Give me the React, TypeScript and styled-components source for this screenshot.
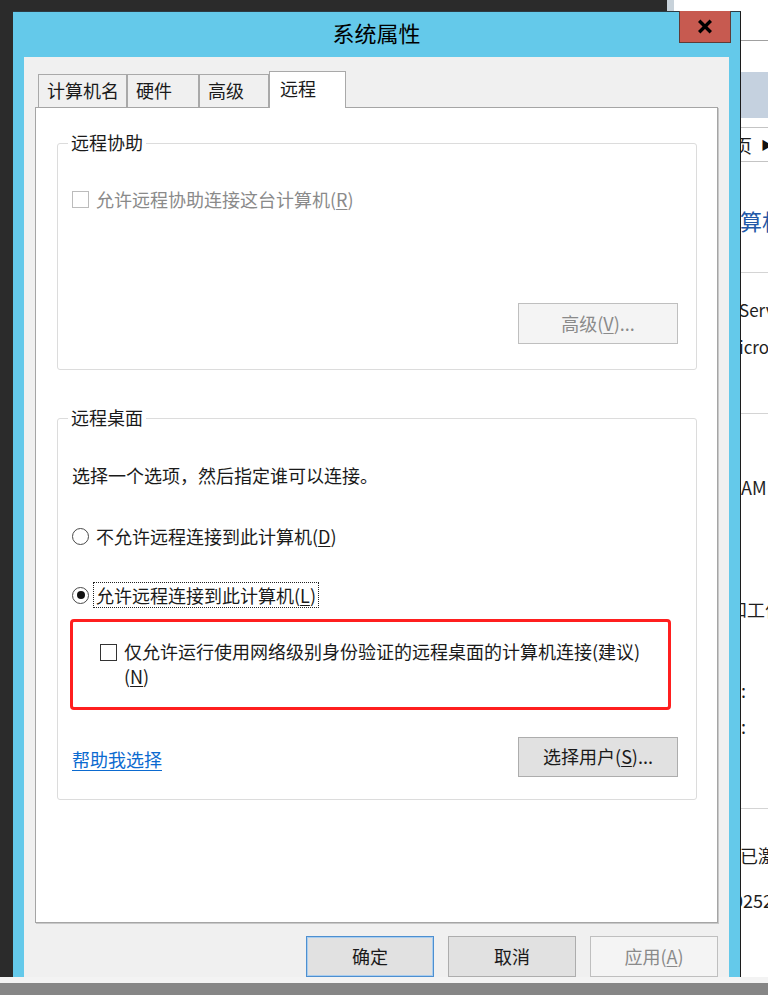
import React from "react";
import styled, { createGlobalStyle } from "styled-components";

const GlobalStyle = createGlobalStyle`
  html, body {
    margin: 0;
    padding: 0;
    overflow: hidden;
  }
  body {
    font-family: "Noto Sans CJK SC", "Noto Sans", sans-serif;
  }
  #root {
    width: 768px;
    height: 995px;
  }
  u {
    text-underline-offset: 2px;
  }
`;

const Desktop = styled.div`
  position: relative;
  width: 768px;
  height: 995px;
  overflow: hidden;
  background: #2b2b2b;
`;

// window behind the dialog, only its left edge shows on the right
const BackWindow = styled.div`
  position: absolute;
  left: 674px;
  top: 0;
  width: 94px;
  height: 100%;
  background: #fff;
  display: flex;
  flex-direction: column;
  padding-left: 65px;
  box-sizing: border-box;
  overflow: hidden;
  font-size: 18px;
  color: #1e1e1e;
  white-space: nowrap;
`;

const BackRule = styled.div<{ $top: number; $color?: string }>`
  margin-top: ${(p) => p.$top}px;
  height: 1px;
  flex: none;
  background: ${(p) => p.$color || "#d4d4d4"};
`;

const BackBand = styled.div`
  margin-top: 31px;
  height: 46px;
  flex: none;
  background: #c5d1df;
`;

const PathBar = styled.div`
  margin-top: 9px;
  height: 35px;
  flex: none;
  box-sizing: border-box;
  border-top: 1px solid #c4c4c4;
  border-bottom: 1px solid #c4c4c4;
  display: flex;
  align-items: center;
  span:first-child {
    margin-left: -5px;
  }
  span:last-child {
    margin-left: 9px;
    font-size: 12px;
    color: #111;
  }
`;

const Frag = styled.div<{ $top: number; $h: number; $size?: number; $color?: string; $shift?: number }>`
  margin-top: ${(p) => p.$top}px;
  margin-left: ${(p) => p.$shift || 0}px;
  height: ${(p) => p.$h}px;
  line-height: ${(p) => p.$h}px;
  flex: none;
  font-size: ${(p) => p.$size || 18}px;
  color: ${(p) => p.$color || "#1e1e1e"};
`;

const TopStrip = styled.div`
  position: absolute;
  left: 667px;
  top: 0;
  width: 7px;
  height: 11px;
  background: #c8d2da;
`;

const Dialog = styled.div`
  position: absolute;
  left: 13px;
  top: 11px;
  width: 728px;
  height: 1000px;
  box-sizing: border-box;
  background: #64c9ea;
  border-top: 1px solid #2c3b44;
  border-right: 1px solid #1c1c1c;
  display: flex;
  flex-direction: column;
`;

const TitleBar = styled.div`
  position: relative;
  height: 45px;
  flex: none;
  box-sizing: border-box;
  padding-bottom: 5px;
  display: flex;
  align-items: center;
  justify-content: center;
`;

const Title = styled.div`
  font-size: 22px;
  line-height: 28px;
  color: #000;
`;

const CloseButton = styled.div`
  position: absolute;
  top: -1px;
  right: 9px;
  width: 52px;
  height: 32px;
  box-sizing: border-box;
  background: #c75a50;
  border: 1px solid #5e3b37;
  border-top: none;
  display: flex;
  align-items: center;
  justify-content: center;
`;

const Client = styled.div`
  flex: 1;
  margin: 0 11px;
  background: #f0f0f0;
  padding: 14px 11px 0 11px;
  display: flex;
  flex-direction: column;
`;

const TabRow = styled.div`
  position: relative;
  z-index: 1;
  height: 37px;
  margin-bottom: -1px;
  padding-left: 3px;
  display: flex;
  align-items: flex-end;
`;

const Tab = styled.div<{ $w: number; $active?: boolean }>`
  width: ${(p) => p.$w}px;
  height: ${(p) => (p.$active ? 37 : 33)}px;
  margin-bottom: ${(p) => (p.$active ? 0 : 1)}px;
  box-sizing: border-box;
  border: 1px solid #a9a9a9;
  border-bottom: none;
  background: ${(p) => (p.$active ? "#fff" : "#f0f0f0")};
  padding-left: ${(p) => (p.$active ? 10 : 8)}px;
  padding-bottom: ${(p) => (p.$active ? 5 : 3)}px;
  display: flex;
  align-items: center;
  font-size: 18px;
  color: #1a1a1a;
`;

const Panel = styled.div`
  position: relative;
  height: 816px;
  flex: none;
  box-sizing: border-box;
  background: #fff;
  border: 1px solid #a5a5a5;
  box-shadow: 1px 1px 0 #c8c8c8;
  padding: 0 20px 0 21px;
  display: flex;
  flex-direction: column;
`;

const Group = styled.fieldset<{ $top: number }>`
  margin: ${(p) => p.$top}px 0 0 0;
  padding: 0;
  min-width: 0;
  border: 1px solid #dcdcdc;
  border-radius: 3px;
`;

const Legend = styled.legend`
  margin-left: 10px;
  padding: 0 3px 2px;
  font-size: 18px;
  line-height: 22px;
  color: #1a1a1a;
`;

const GroupBody = styled.div<{ $bottom: number }>`
  padding: 0 18px ${(p) => p.$bottom}px 14px;
  display: flex;
  flex-direction: column;
`;

const CheckRow = styled.div<{ $top: number }>`
  margin-top: ${(p) => p.$top}px;
  display: flex;
  align-items: center;
  gap: 7px;
  font-size: 18px;
  line-height: 24px;
`;

const Box = styled.span<{ $disabled?: boolean }>`
  width: 17px;
  height: 17px;
  flex: none;
  box-sizing: border-box;
  background: #fff;
  border: 1px solid ${(p) => (p.$disabled ? "#bcbcbc" : "#333")};
`;

const Label = styled.span<{ $disabled?: boolean }>`
  color: ${(p) => (p.$disabled ? "#8a8a8a" : "#1a1a1a")};
`;

const ButtonRow = styled.div<{ $top: number }>`
  margin-top: ${(p) => p.$top}px;
  display: flex;
  justify-content: flex-end;
`;

const Button = styled.div<{ $w: number; $h: number; $kind?: "default" | "disabled" }>`
  width: ${(p) => p.$w}px;
  height: ${(p) => p.$h}px;
  flex: none;
  box-sizing: border-box;
  padding-bottom: 2px;
  display: flex;
  align-items: center;
  justify-content: center;
  font-size: 18px;
  background: ${(p) => (p.$kind === "disabled" ? "#f4f4f4" : "#e1e1e1")};
  color: ${(p) => (p.$kind === "disabled" ? "#8a8a8a" : "#1a1a1a")};
  border: 1px solid
    ${(p) => (p.$kind === "default" ? "#4d8fd0" : p.$kind === "disabled" ? "#bfbfbf" : "#adadad")};
  box-shadow: ${(p) => (p.$kind === "default" ? "inset 0 0 0 1px #a9cdef" : "none")};
`;

const Desc = styled.div`
  margin-top: 33px;
  font-size: 18px;
  line-height: 24px;
  color: #1a1a1a;
`;

const RadioRow = styled.div<{ $top: number }>`
  margin-top: ${(p) => p.$top}px;
  display: flex;
  align-items: center;
  gap: 4px;
  font-size: 18px;
`;

const Radio = styled.span<{ $checked?: boolean }>`
  position: relative;
  width: 17px;
  height: 17px;
  flex: none;
  box-sizing: border-box;
  border: 1px solid #4a4a4a;
  border-radius: 50%;
  background: #fff;
  &::after {
    content: "";
    display: ${(p) => (p.$checked ? "block" : "none")};
    position: absolute;
    left: 3.5px;
    top: 3.5px;
    width: 8px;
    height: 8px;
    border-radius: 50%;
    background: #111;
  }
`;

const RadioLabel = styled.span<{ $focused?: boolean }>`
  padding: 1px 2px;
  line-height: 22px;
  color: #1a1a1a;
  border: 1px dotted ${(p) => (p.$focused ? "#222" : "transparent")};
`;

// red annotation frame drawn around the NLA option
const Highlight = styled.div`
  margin: 11px 7px 0 -2px;
  border: 3px solid #ff1f1f;
  border-radius: 4px;
  padding: 17px 10px 18px 27px;
  display: flex;
  align-items: flex-start;
  gap: 7px;
  font-size: 18px;
  line-height: 25px;
  color: #1a1a1a;
  ${Box} {
    margin-top: 5px;
  }
`;

const Footer = styled.div`
  margin-top: 27px;
  display: flex;
  align-items: center;
  justify-content: space-between;
`;

const HelpLink = styled.a`
  font-size: 18px;
  line-height: 24px;
  color: #0b6ad0;
  text-decoration: underline;
  text-underline-offset: 3px;
  margin-top: 3px;
`;

const DialogButtons = styled.div`
  margin-top: 13px;
  display: flex;
  justify-content: flex-end;
  gap: 14px;
`;

const Taskbar = styled.div`
  position: absolute;
  left: 0;
  right: 0;
  bottom: 0;
  height: 12px;
  background: #868686;
  border-top: 6px solid #f3f3f3;
`;

const App = () => {
  return (
    <Desktop>
      <GlobalStyle />
      <TopStrip />
      <BackWindow>
        <BackRule $top={40} $color="#a0a0a0" />
        <BackBand />
        <PathBar>
          <span>页</span>
          <span>▶</span>
        </PathBar>
        <Frag $top={36} $h={44} $size={22} $color="#2359a8" $shift={1}>
          算机
        </Frag>
        <BackRule $top={30} />
        <Frag $top={18} $h={37} $size={17}>Serv</Frag>
        <Frag $top={0} $h={37} $size={17}>icro</Frag>
        <BackRule $top={48} />
        <Frag $top={55} $h={36} $shift={2}>AM</Frag>
        <Frag $top={86} $h={36} $shift={-10}>和工作</Frag>
        <Frag $top={45} $h={36} $shift={2}>:</Frag>
        <Frag $top={0} $h={36} $shift={2}>:</Frag>
        <BackRule $top={64} />
        <Frag $top={28} $h={36} $shift={1}>已激</Frag>
        <Frag $top={9} $h={36} $shift={-6}>0252</Frag>
      </BackWindow>

      <Dialog>
        <TitleBar>
          <Title>系统属性</Title>
          <CloseButton>
            <svg width="16" height="15" viewBox="0 0 16 15">
              <path d="M2.2 1.8 L13.8 13.2 M13.8 1.8 L2.2 13.2" stroke="#000" strokeWidth="3.4" />
            </svg>
          </CloseButton>
        </TitleBar>

        <Client>
          <TabRow>
            <Tab $w={89}>计算机名</Tab>
            <Tab $w={72}>硬件</Tab>
            <Tab $w={70}>高级</Tab>
            <Tab $w={77} $active>
              远程
            </Tab>
          </TabRow>

          <Panel>
            <Group $top={23}>
              <Legend>远程协助</Legend>
              <GroupBody $bottom={25}>
                <CheckRow $top={32}>
                  <Box $disabled />
                  <Label $disabled>
                    允许远程协助连接这台计算机(<u>R</u>)
                  </Label>
                </CheckRow>
                <ButtonRow $top={92}>
                  <Button $w={160} $h={41} $kind="disabled">
                    高级(<u>V</u>)...
                  </Button>
                </ButtonRow>
              </GroupBody>
            </Group>

            <Group $top={36}>
              <Legend>远程桌面</Legend>
              <GroupBody $bottom={22}>
                <Desc>选择一个选项，然后指定谁可以连接。</Desc>
                <RadioRow $top={36}>
                  <Radio />
                  <RadioLabel>
                    不允许远程连接到此计算机(<u>D</u>)
                  </RadioLabel>
                </RadioRow>
                <RadioRow $top={33}>
                  <Radio $checked />
                  <RadioLabel $focused>
                    允许远程连接到此计算机(<u>L</u>)
                  </RadioLabel>
                </RadioRow>
                <Highlight>
                  <Box />
                  <span>
                    仅允许运行使用网络级别身份验证的远程桌面的计算机连接(建议)
                    <br />(<u>N</u>)
                  </span>
                </Highlight>
                <Footer>
                  <HelpLink>帮助我选择</HelpLink>
                  <Button $w={160} $h={40}>
                    选择用户(<u>S</u>)...
                  </Button>
                </Footer>
              </GroupBody>
            </Group>
          </Panel>

          <DialogButtons>
            <Button $w={128} $h={41} $kind="default">
              确定
            </Button>
            <Button $w={128} $h={41}>
              取消
            </Button>
            <Button $w={128} $h={41} $kind="disabled">
              应用(<u>A</u>)
            </Button>
          </DialogButtons>
        </Client>
      </Dialog>

      <Taskbar />
    </Desktop>
  );
};

export default App;
